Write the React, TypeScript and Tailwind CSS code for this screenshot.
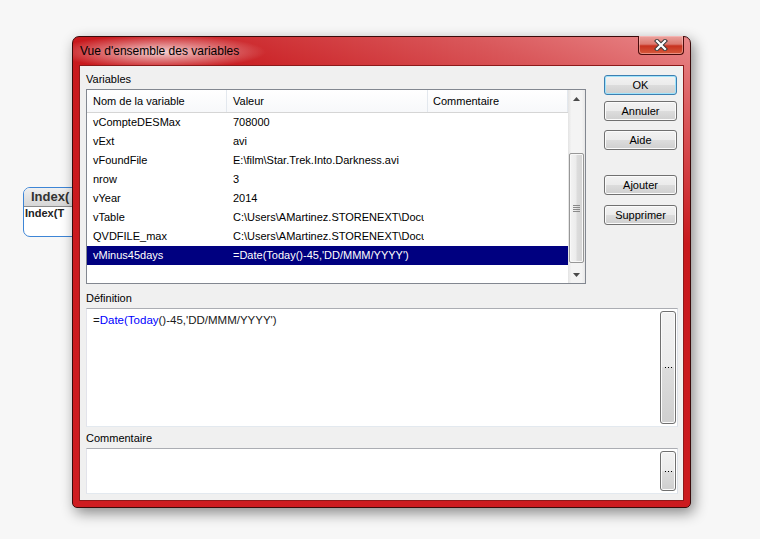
import React from 'react';

// Données de la liste des variables
const variables: [string, string][] = [
  ['vCompteDESMax', '708000'],
  ['vExt', 'avi'],
  ['vFoundFile', 'E:\\film\\Star.Trek.Into.Darkness.avi'],
  ['nrow', '3'],
  ['vYear', '2014'],
  ['vTable', 'C:\\Users\\AMartinez.STORENEXT\\Documents\\QlikView'],
  ['QVDFILE_max', 'C:\\Users\\AMartinez.STORENEXT\\Documents\\QVD'],
  ['vMinus45days', "=Date(Today()-45,'DD/MMM/YYYY')"],
];

const btnBase =
  'h-[20px] w-[73px] rounded-[3px] border text-[11px] leading-[18px] text-black text-center bg-[linear-gradient(#f2f2f2_0%,#ebebeb_50%,#dddddd_50%,#cfcfcf_100%)]';

const DialogButton: React.FC<{ label: string; focused?: boolean; className?: string }> = ({
  label,
  focused,
  className = '',
}) => (
  <div
    className={`${btnBase} ${
      focused
        ? 'border-[#3c7fb1] shadow-[inset_0_0_0_1px_#9fe3fb]'
        : 'border-[#707070] shadow-[inset_0_0_0_1px_#fbfbfb]'
    } ${className}`}
  >
    {label}
  </div>
);

const EllipsisButton: React.FC = () => (
  <div className="w-[16px] my-[2px] mr-[1px] rounded-[3px] border border-[#707070] shadow-[inset_0_0_0_1px_#fbfbfb] bg-[linear-gradient(#f2f2f2_0%,#ebebeb_50%,#dddddd_50%,#cfcfcf_100%)] flex items-center justify-center gap-[2px]">
    <div className="w-[1px] h-[1px] bg-black" />
    <div className="w-[1px] h-[1px] bg-black" />
    <div className="w-[1px] h-[1px] bg-black" />
  </div>
);

const Arrow: React.FC<{ up?: boolean }> = ({ up }) => (
  <div className="h-[17px] flex items-center justify-center">
    <svg width="7" height="4" viewBox="0 0 7 4">
      {up ? <polygon points="3.5,0 7,4 0,4" fill="#4a4a4a" /> : <polygon points="0,0 7,0 3.5,4" fill="#4a4a4a" />}
    </svg>
  </div>
);

const Scrollbar: React.FC = () => (
  <div className="w-[17px] h-full flex flex-col bg-[linear-gradient(to_right,#e3e3e3,#f4f4f4_20%,#f4f4f4_80%,#e8e8e8)]">
    <Arrow up />
    <div className="h-[46px]" />
    <div className="h-[110px] mx-[1px] rounded-[2px] border border-[#979797] shadow-[inset_0_0_0_1px_#f8f8f8] bg-[linear-gradient(to_right,#f3f3f3,#ececec_45%,#dcdcdc_55%,#d4d4d4)] flex flex-col items-center justify-center gap-[1px]">
      <div className="w-[7px] h-[1px] bg-[#8a8a8a]" />
      <div className="w-[7px] h-[1px] bg-[#8a8a8a]" />
      <div className="w-[7px] h-[1px] bg-[#8a8a8a]" />
      <div className="w-[7px] h-[1px] bg-[#8a8a8a]" />
    </div>
    <div className="flex-1" />
    <Arrow />
  </div>
);

const VariableList: React.FC = () => (
  <div className="w-[500px] h-[195px] border border-[#828790] bg-white flex">
    <div className="w-[481px] flex flex-col">
      {/* En-tête des colonnes */}
      <div className="h-[23px] flex border-b border-[#d5d5d5] bg-[linear-gradient(#ffffff,#f7f8fa)] leading-[22px]">
        <div className="w-[140px] pl-[6px] border-r border-[#e3e8ee]">Nom de la variable</div>
        <div className="w-[201px] pl-[6px] border-r border-[#e3e8ee]">Valeur</div>
        <div className="w-[140px] pl-[5px] border-r border-[#e3e8ee]">Commentaire</div>
      </div>
      {variables.map(([nom, valeur], i) => {
        const selected = i === variables.length - 1;
        return (
          <div
            key={nom}
            className={`h-[19px] flex leading-[19px] ${selected ? 'bg-[#000080] text-white' : 'text-black'}`}
          >
            <div className="w-[140px] pl-[6px] whitespace-nowrap overflow-hidden">{nom}</div>
            <div className="w-[201px] pl-[6px] pr-[4px]">
              <div className="whitespace-nowrap overflow-hidden">{valeur}</div>
            </div>
            <div className="w-[140px]" />
          </div>
        );
      })}
    </div>
    <Scrollbar />
  </div>
);

export default function App() {
  return (
    <div className="relative w-[760px] h-[539px] overflow-hidden bg-[#f7f7f7] font-['Liberation_Sans',Arial,sans-serif] text-[11px] text-black">
      {/* Boîte en arrière-plan sur le canevas */}
      <div className="absolute left-[23px] top-[187px] w-[120px] h-[50px] rounded-[7px] border border-[#3d85d6] bg-white overflow-hidden">
        <div className="h-[19px] border-b border-[#8a8a8a] bg-[linear-gradient(#f0f0f0,#d6d6d6)] pl-[7px] text-[13px] leading-[18px] font-bold text-[#333]">
          Index(
        </div>
        <div className="pl-[1px] text-[11px] leading-[13px] font-bold text-[#222]">Index(T</div>
      </div>

      {/* Fenêtre de dialogue */}
      <div className="absolute left-[72px] top-[36px] w-[619px] h-[472px] flex flex-col rounded-t-[7px] rounded-b-[5px] border border-[#3a0b0b] shadow-[3px_5px_14px_rgba(0,0,0,0.45)] bg-[radial-gradient(ellipse_105px_17px_at_88px_15px,rgba(255,255,255,0.8),rgba(255,255,255,0)_100%),linear-gradient(200deg,#e98789_0%,#d9575a_12%,#c8191d_30%,#cf1d21_100%)]">
        {/* Barre de titre */}
        <div className="h-[28px] flex items-start justify-between">
          <div className="mt-[6px] ml-[7px] text-[12px] leading-[16px] text-black">Vue d'ensemble des variables</div>
          <div className="-mt-[1px] mr-[6px] w-[46px] h-[19px] rounded-b-[4px] border border-t-0 border-[#4a0c0c] shadow-[inset_0_0_0_1px_rgba(255,200,200,0.5)] bg-[linear-gradient(#eba39f_0%,#dd7a70_45%,#c8321f_55%,#d65a3c_100%)] flex items-center justify-center">
            <svg width="14" height="12" viewBox="0 0 14 12">
              <path d="M3 2 L11 10 M11 2 L3 10" stroke="#3d3d3d" strokeWidth="4.2" strokeLinecap="square" />
              <path d="M3 2 L11 10 M11 2 L3 10" stroke="#ffffff" strokeWidth="2.2" strokeLinecap="square" />
            </svg>
          </div>
        </div>

        {/* Zone client */}
        <div className="flex-1 mx-[6px] mb-[6px] bg-[#f0f0f0] border border-[#8c1a1a] pt-[6px] pl-[6px] flex flex-col">
          <div className="flex">
            <div className="flex flex-col">
              <div className="h-[17px] leading-[14px]">Variables</div>
              <VariableList />
            </div>
            <div className="ml-[18px] flex flex-col">
              <DialogButton label="OK" focused className="mt-[3px]" />
              <DialogButton label="Annuler" className="mt-[6px]" />
              <DialogButton label="Aide" className="mt-[9px]" />
              <DialogButton label="Ajouter" className="mt-[25px]" />
              <DialogButton label="Supprimer" className="mt-[10px]" />
            </div>
          </div>

          {/* Définition */}
          <div className="h-[24px] pt-[7px] leading-[14px]">Définition</div>
          <div className="w-[592px] h-[119px] bg-white border border-[#abadb3] border-l-[#e2e3ea] border-r-[#dbdfe6] border-b-[#e3e9ef] flex">
            <div className="flex-1 pl-[6px] pt-[4px] text-[11.5px] leading-[14px] text-[#1a1a1a]">
              =<span className="text-[#0000ff]">Date(Today</span>()-45,'DD/MMM/YYYY')
            </div>
            <EllipsisButton />
          </div>

          {/* Commentaire */}
          <div className="h-[21px] pt-[4px] leading-[14px]">Commentaire</div>
          <div className="w-[592px] h-[46px] bg-white border border-[#abadb3] border-l-[#e2e3ea] border-r-[#dbdfe6] border-b-[#e3e9ef] flex">
            <div className="flex-1" />
            <EllipsisButton />
          </div>
        </div>
      </div>
    </div>
  );
}
